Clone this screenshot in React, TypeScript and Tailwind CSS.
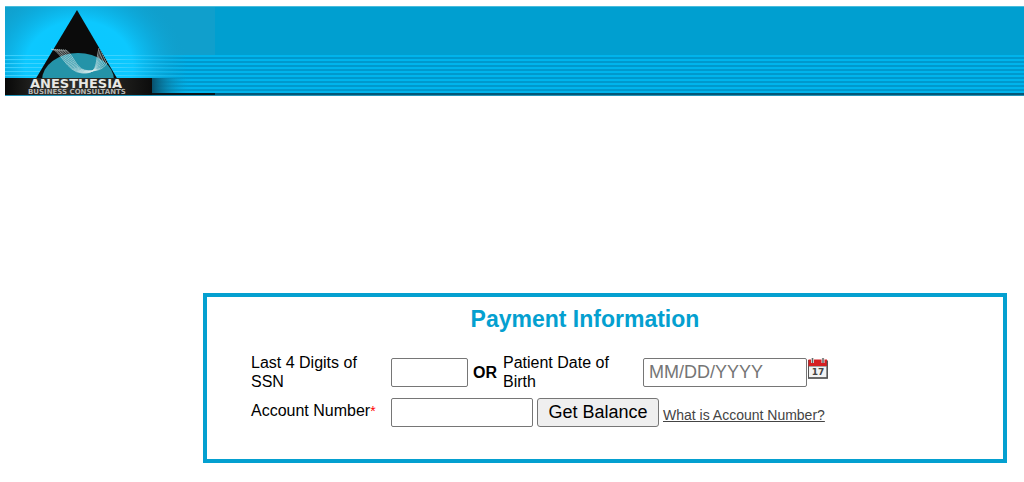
const strands = [0, 1, 2, 3, 4, 5, 6, 7];

function Logo() {
  return (
    <svg
      viewBox="0 0 210 88"
      className="block h-[88px] w-[210px]"
      role="img"
      aria-label="Anesthesia Business Consultants"
    >
      <defs>
        <radialGradient id="glow" gradientUnits="userSpaceOnUse" cx="0" cy="0" r="1" gradientTransform="translate(74 60) scale(108 92)">
          <stop offset="0" stopColor="#08c8ff" />
          <stop offset="0.5" stopColor="#0cc8ff" />
          <stop offset="0.72" stopColor="#0cb2e6" stopOpacity="0.7" />
          <stop offset="1" stopColor="#109fcc" stopOpacity="0" />
        </radialGradient>
        <linearGradient id="shade" x1="0" x2="1" y1="0" y2="0">
          <stop offset="0" stopColor="#08506c" />
          <stop offset="1" stopColor="#08a8dc" stopOpacity="0" />
        </linearGradient>
        <linearGradient id="lines" gradientUnits="userSpaceOnUse" x1="0" x2="190" y1="0" y2="0">
          <stop offset="0" stopColor="#50d8ff" />
          <stop offset="0.6" stopColor="#50d8ff" />
          <stop offset="1" stopColor="#20b8e8" stopOpacity="0" />
        </linearGradient>
        <linearGradient id="plate" x1="0" x2="1" y1="0" y2="0">
          <stop offset="0" stopColor="#080808" />
          <stop offset="0.3" stopColor="#30302c" />
          <stop offset="0.75" stopColor="#22221f" />
          <stop offset="1" stopColor="#0c0c0c" />
        </linearGradient>
        <clipPath id="peak">
          <path d="M72 3 L113 73 H30 Z" />
        </clipPath>
      </defs>
      <rect width="210" height="48" fill="#109fcc" />
      <rect width="210" height="88" fill="url(#glow)" />
      <g fill="url(#lines)" opacity="0.7">
        {[48, 52, 56, 60, 64, 68].map((y) => (
          <rect key={y} y={y} width="190" height="1" />
        ))}
      </g>
      <path d="M72 3 L113 73 H30 Z" fill="#0b0b0b" />
      <ellipse cx="73" cy="73" rx="36" ry="27" fill="#2493a8" clipPath="url(#peak)" />
      <g fill="none" stroke="#dcecec" strokeWidth="0.7" strokeOpacity="0.85">
        {strands.map((i) => (
          <path
            key={i}
            d={`M${46 + i * 2} ${42 + i * 0.1} C${56 + i * 1.6} ${43 + i * 0.3} ${61 + i * 1.4} ${65 - i * 0.5} ${77 + i * 0.4} ${66 - i * 0.4} S${90 + i * 1.2} ${58 + i * 0.8} ${94 + i * 1.2} ${41 + i * 2}`}
          />
        ))}
      </g>
      <rect y="71" width="147" height="17" fill="url(#plate)" />
      <rect x="147" y="71" width="40" height="15" fill="url(#shade)" />
      <rect x="147" y="86" width="63" height="2" fill="#0c1418" />
      <text x="25" y="81" fontFamily="DejaVu Sans" fontWeight="700" fontSize="13" fill="#e8e8e4">
        ANESTHESIA
      </text>
      <text x="23" y="87" fontFamily="DejaVu Sans" fontWeight="700" fontSize="7" fill="#b4b4b0">
        BUSINESS CONSULTANTS
      </text>
    </svg>
  );
}

function CalendarIcon() {
  return (
    <svg viewBox="0 0 20 21" className="block h-[21px] w-5" aria-hidden="true">
      <rect x="0.500" y="2.500" width="18.500" height="17.500" fill="#f3f3f3" stroke="#555" />
      <path d="M0.500 1.500H19V8.500H0.500Z" fill="#d51f22" />
      <path d="M1 8.500H18.500" stroke="#a8a8a8" />
      <path d="M4.500 0V5M15 0V5" stroke="#eee" strokeWidth="3" />
      <path d="M4.500 0V5M15 0V5" stroke="#666" strokeWidth="1.500" />
      <path d="M0 20H20M19.500 3V20" stroke="#555" strokeWidth="1.500" />
      <text x="10" y="17" textAnchor="middle" fontFamily="DejaVu Sans" fontWeight="700" fontSize="9" fill="#444">
        17
      </text>
    </svg>
  );
}

const field =
  "h-[29px] rounded-xs border border-[#767676] bg-white px-[5px] text-lg leading-5 text-black placeholder:text-[#757575]";

export default function App() {
  return (
    <div className="pt-1.5 pb-5 font-['Liberation_Sans',Arial,sans-serif] text-base leading-[19px] text-black">
      <header className="ml-[5px] border-t border-b border-t-[#48bcdc] border-b-[#2494b8] bg-[linear-gradient(to_bottom,#009fd0_0px,#009fd0_48px,transparent_48px,transparent_86px,#045878_86px),repeating-linear-gradient(to_bottom,#00b4ec_0px,#00b4ec_2px,#0098cc_2px,#0098cc_4px)]">
        <Logo />
      </header>

      <main className="mt-[197px] mr-[17px] ml-[203px] border-4 border-[#04a0d0] px-11 pt-2 pb-8">
        <h1 className="-ml-10 text-center text-[23px] leading-7 font-bold text-[#04a0d0]">
          Payment Information
        </h1>

        <form className="mt-5" onSubmit={(e) => e.preventDefault()}>
          <div className="flex items-center">
            <label htmlFor="ssn" className="w-[140px] shrink-0 pr-5">
              Last 4 Digits of SSN
            </label>
            <input id="ssn" type="text" maxLength={4} className={`${field} w-[77px]`} />
            <b className="mx-[5px]">OR</b>
            <label htmlFor="dob" className="ml-px w-[140px] shrink-0 pr-5">
              Patient Date of Birth
            </label>
            <input id="dob" type="text" placeholder="MM/DD/YYYY" className={`${field} w-[164px]`} />
            <button type="button" aria-label="Choose date" className="ml-px pb-2">
              <CalendarIcon />
            </button>
          </div>

          <div className="mt-[7px] flex items-center">
            <label htmlFor="account" className="w-[140px] shrink-0 pb-1">
              Account Number<span className="text-sm text-[#ff0000]">*</span>
            </label>
            <input id="account" type="text" className={`${field} w-[142px]`} />
            <button
              type="submit"
              className="ml-1 h-[29px] w-[122px] shrink-0 rounded-[3px] border border-[#767676] bg-[#efefef] pb-0.5 text-lg leading-5"
            >
              Get Balance
            </button>
            <a href="#account-help" className="ml-1 pt-1 text-sm text-[#444] underline">
              What is Account Number?
            </a>
          </div>
        </form>
      </main>
    </div>
  );
}
